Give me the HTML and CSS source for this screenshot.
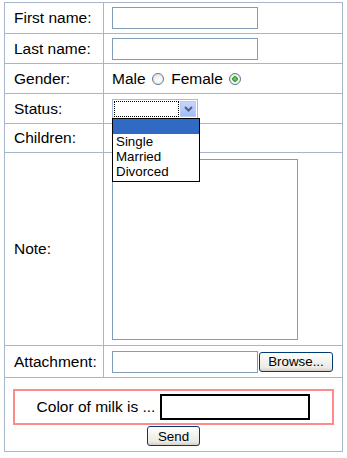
FILE: index.html
```html
<!DOCTYPE html>
<html>
<head>
    <link rel="stylesheet" href="styles.css">
</head>
<body>
    <form id="applicationForm">
        <table class="formTable">
            <colgroup>
                <col class="labelCol">
                <col>
            </colgroup>
            <tr class="rowFirst">
                <td class="label"><label for="firstName">First name:</label></td>
                <td class="field"><input type="text" id="firstName" class="textInput"></td>
            </tr>
            <tr class="rowLast">
                <td class="label"><label for="lastName">Last name:</label></td>
                <td class="field"><input type="text" id="lastName" class="textInput"></td>
            </tr>
            <tr class="rowGender">
                <td class="label">Gender:</td>
                <td class="field">
                    <label for="male">Male</label>
                    <input type="radio" id="male" name="gender" value="male" class="radio">
                    <label for="female">Female</label>
                    <input type="radio" id="female" name="gender" value="female" class="radio" checked>
                </td>
            </tr>
            <tr class="rowStatus">
                <td class="label">Status:</td>
                <td class="field">
                    <div class="selectWrap">
                        <div class="selectBox">
                            <span class="selectValue"></span>
                            <span class="selectArrow">
                                <svg width="9" height="6" viewBox="0 0 9 6"><path d="M1 1 L4.5 4.5 L8 1" fill="none" stroke="#4d6185" stroke-width="2"/></svg>
                            </span>
                        </div>
                        <ul class="selectList">
                            <li class="selected">&nbsp;</li>
                            <li>Single</li>
                            <li>Married</li>
                            <li>Divorced</li>
                        </ul>
                    </div>
                </td>
            </tr>
            <tr class="rowChildren">
                <td class="label">Children:</td>
                <td class="field"></td>
            </tr>
            <tr class="rowNote">
                <td class="label"><label for="note">Note:</label></td>
                <td class="field"><textarea id="note" class="noteArea"></textarea></td>
            </tr>
            <tr class="rowAttachment">
                <td class="label">Attachment:</td>
                <td class="field">
                    <div class="fileField">
                        <input type="text" class="textInput">
                        <button type="button" class="xpButton browseButton">Browse...</button>
                    </div>
                </td>
            </tr>
            <tr class="rowSubmit">
                <td class="submitCell" colspan="2">
                    <div class="captcha">
                        <label for="milk">Color of milk is ...</label>
                        <input type="text" id="milk" class="captchaInput">
                    </div>
                    <button type="button" class="xpButton sendButton">Send</button>
                </td>
            </tr>
        </table>
    </form>
</body>
</html>
```

FILE: styles.css
```css
body {
    font-family: Arial, "Liberation Sans", sans-serif;
    font-size: 15.5px;
    color: #000;
    background-color: #fff;
    margin: 0;
    padding: 2px 0 0 4px;
}
.formTable {
    border-collapse: collapse;
    table-layout: fixed;
    width: 339px;
}
.labelCol {
    width: 99px;
}
.formTable td {
    border: 1px solid #a7b5cb;
    padding: 0 0 0 8px;
    vertical-align: middle;
}
.formTable td.label {
    padding-left: 9px;
}
.rowFirst { height: 31px; }
.rowLast { height: 30px; }
.rowGender { height: 30px; }
.rowStatus { height: 30px; }
.rowChildren { height: 29px; }
.rowNote { height: 193px; }
.rowAttachment { height: 32px; }
.rowSubmit { height: 74px; }

.textInput {
    box-sizing: border-box;
    width: 146px;
    height: 22px;
    border: 1px solid #7f9db9;
    margin: 0;
    padding: 1px 2px;
    font-family: Arial, "Liberation Sans", sans-serif;
    font-size: 13px;
    vertical-align: middle;
}
.radio {
    appearance: none;
    -webkit-appearance: none;
    box-sizing: border-box;
    width: 12px;
    height: 12px;
    margin: 0 3px 0 2px;
    border: 1px solid #5a7a9c;
    border-radius: 50%;
    background: radial-gradient(circle at 60% 60%, #ffffff 0%, #f1f1ee 45%, #d9d9d2 100%);
    vertical-align: -1px;
}
.radio:checked {
    background: radial-gradient(circle, #7fe27f 0px, #2eaa2e 2px, #21a121 2.5px, transparent 3px),
        radial-gradient(circle at 60% 60%, #ffffff 0%, #f1f1ee 45%, #d9d9d2 100%);
}

.selectWrap {
    position: relative;
    display: inline-block;
    vertical-align: middle;
}
.selectBox {
    box-sizing: border-box;
    display: flex;
    width: 86px;
    height: 20px;
    border: 1px solid #a5b9dc;
    background-color: #fff;
}
.selectValue {
    flex: 1;
    margin: 1px 0 1px 1px;
    outline: 1px dotted #000;
    outline-offset: -1px;
}
.selectArrow {
    display: flex;
    align-items: center;
    justify-content: center;
    width: 16px;
    margin: 1px;
    background: linear-gradient(#c6d6fc, #a3bcf6);
    border: 1px solid #b9cbf3;
    box-sizing: border-box;
}
.selectList {
    position: absolute;
    top: 19px;
    left: 0;
    box-sizing: border-box;
    width: 88px;
    margin: 0;
    padding: 0 0 2px 0;
    list-style: none;
    background-color: #fff;
    border: 1px solid #000;
    font-size: 13.33px;
    z-index: 2;
}
.selectList li {
    height: 15px;
    line-height: 15px;
    padding-left: 3px;
}
.selectList li.selected {
    background-color: #316ac5;
    color: #fff;
}

.noteArea {
    display: block;
    box-sizing: border-box;
    width: 186px;
    height: 181px;
    margin: 0;
    border: 1px solid #7f9db9;
    resize: none;
}
.fileField {
    display: flex;
    align-items: center;
    gap: 1px;
}
.xpButton {
    box-sizing: border-box;
    height: 20px;
    margin: 0;
    padding: 0;
    border: 1px solid #003c74;
    border-radius: 3px;
    background: linear-gradient(#ffffff, #f4f4f0 40%, #ecebe6 80%, #d6d0c5);
    font-family: Arial, "Liberation Sans", sans-serif;
    font-size: 13.33px;
    color: #000;
}
.browseButton {
    width: 74px;
}
.sendButton {
    display: block;
    width: 53px;
    margin: 1px auto 0;
}

.formTable td.submitCell {
    padding: 11px 8px 4px 8px;
    vertical-align: top;
}
.captcha {
    box-sizing: border-box;
    display: flex;
    align-items: center;
    justify-content: center;
    gap: 5px;
    height: 36px;
    border: 2px solid #ff8a8a;
}
.captchaInput {
    box-sizing: border-box;
    width: 150px;
    height: 26px;
    margin: 0;
    border: 2px solid #000;
}
```
